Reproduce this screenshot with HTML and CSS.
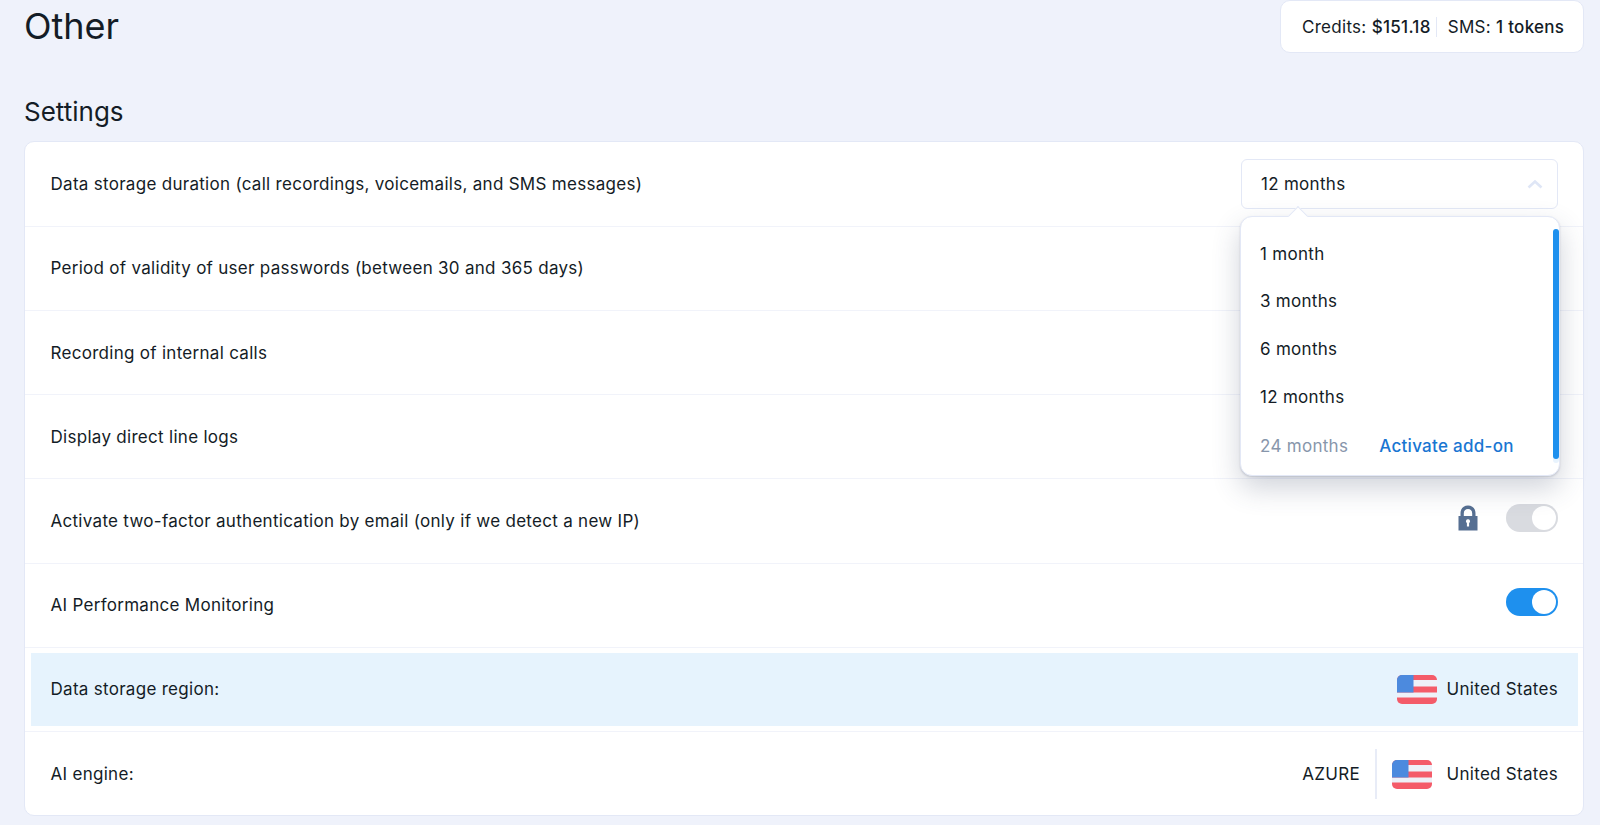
FILE: index.html
```html
<html>
    <head>
        <title>Other</title>
        <link rel="stylesheet" href="styles.css">
    </head>
    <body>
        <div class="page">
            <div class="top">
                <h1>Other</h1>
                <div class="credits">
                    <span class="credit-part">Credits: <b>$151.18</b></span>
                    <span class="credit-part sms">SMS: <b>1 tokens</b></span>
                </div>
            </div>
            <h2>Settings</h2>
            <div class="card">
                <div class="row">
                    <span>Data storage duration (call recordings, voicemails, and SMS messages)</span>
                    <div class="select-wrap">
                        <div class="select">
                            <span>12 months</span>
                            <svg class="chevron" width="16" height="10" viewBox="0 0 16 10"><path d="M1.5 8.5 L8 2.5 L14.5 8.5" fill="none" stroke="#dfe6f6" stroke-width="2.6"/></svg>
                        </div>
                        <div class="menu">
                            <div class="menu-arrow"></div>
                            <div class="menu-item">1 month</div>
                            <div class="menu-item">3 months</div>
                            <div class="menu-item">6 months</div>
                            <div class="menu-item">12 months</div>
                            <div class="menu-item locked">
                                <span class="muted">24 months</span>
                                <span class="addon">Activate add-on</span>
                            </div>
                            <div class="scrollbar"></div>
                        </div>
                    </div>
                </div>
                <div class="row"><span>Period of validity of user passwords (between 30 and 365 days)</span></div>
                <div class="row"><span>Recording of internal calls</span></div>
                <div class="row"><span>Display direct line logs</span></div>
                <div class="row">
                    <span>Activate two-factor authentication by email (only if we detect a new IP)</span>
                    <div class="right raised">
                        <svg class="lock" width="20" height="26" viewBox="0 0 20 26">
                            <path d="M0.5 11 H2.5 V8.5 C2.5 3.4 5.6 0.5 10 0.5 C14.4 0.5 17.5 3.4 17.5 8.5 V11 H19.5 V25.5 H0.5 Z M5.8 11 H14.2 V8.5 C14.2 5.6 12.6 4 10 4 C7.4 4 5.8 5.6 5.8 8.5 Z M10 14.2 A2 2 0 0 0 8.9 17.9 V21.6 H11.1 V17.9 A2 2 0 0 0 10 14.2 Z" fill="#566f92" fill-rule="evenodd"/>
                        </svg>
                        <div class="toggle off"><div class="knob"></div></div>
                    </div>
                </div>
                <div class="row">
                    <span>AI Performance Monitoring</span>
                    <div class="toggle on raised"><div class="knob"></div></div>
                </div>
                <div class="row">
                    <div class="highlight">
                        <span>Data storage region:</span>
                        <div class="right small-gap">
                            <svg class="flag" width="40" height="29" viewBox="0 0 40 29">
                                <use href="#us-flag"/>
                            </svg>
                            <span>United States</span>
                        </div>
                    </div>
                </div>
                <div class="row last">
                    <span>AI engine:</span>
                    <div class="right">
                        <span>AZURE</span>
                        <div class="divider"></div>
                        <svg class="flag" width="40" height="29" viewBox="0 0 40 29">
                            <use href="#us-flag"/>
                        </svg>
                        <span>United States</span>
                    </div>
                </div>
            </div>
        </div>
        <svg width="0" height="0" class="defs">
            <defs>
                <clipPath id="flag-clip"><rect width="40" height="29" rx="5"/></clipPath>
                <g id="us-flag" clip-path="url(#flag-clip)">
                    <rect width="40" height="29" fill="#f45b69"/>
                    <rect y="5" width="40" height="6.5" fill="#eef1f8"/>
                    <rect y="17.5" width="40" height="5" fill="#eef1f8"/>
                    <rect width="16.5" height="17.5" fill="#4c8ade"/>
                </g>
            </defs>
        </svg>
    </body>
</html>
```

FILE: styles.css
```css
*
{
    box-sizing: border-box;
}

body
{
    margin: 0;
    height: 825px;
    overflow: hidden;
    background-color: #eff2fb;
    color: #141c26;
    font-family: Inter, "Liberation Sans", sans-serif;
    font-size: 17px;
    letter-spacing: 0.29px;
}

.page
{
    padding: 0 16px 0 24px;
}

.top
{
    display: flex;
    justify-content: space-between;
    align-items: flex-start;
    height: 94px;
}

h1
{
    margin: 4px 0 0 0;
    font-size: 36px;
    line-height: 44px;
    font-weight: 400;
    letter-spacing: 0;
}

h2
{
    margin: 0 0 12px 0;
    font-size: 26px;
    line-height: 35px;
    font-weight: 400;
    letter-spacing: 0;
}

b
{
    font-weight: 500;
}

.credits
{
    display: flex;
    align-items: center;
    width: 304px;
    height: 53px;
    padding: 0 21px;
    background-color: white;
    border: 1.5px solid #e3e8f6;
    border-radius: 10px;
}

.credit-part
{
    white-space: nowrap;
}

.sms
{
    margin-left: 5px;
    padding-left: 11px;
    border-left: 1px solid #e3e8f6;
}

.card
{
    padding-top: 0.6px;
    background-color: white;
    border: 1.5px solid #e3e8f6;
    border-radius: 10px;
    height: 675px;
}

.row
{
    display: flex;
    justify-content: space-between;
    align-items: center;
    height: 84.2px;
    padding: 0 25px 0 25.5px;
    border-bottom: 1px solid #f1f3fa;
}

.row.last
{
    border-bottom: none;
}

.right
{
    display: flex;
    align-items: center;
    gap: 15px;
}

.raised
{
    gap: 28px;
    margin-top: -6px;
}

.small-gap
{
    gap: 10px;
}

.select-wrap
{
    position: relative;
}

.select
{
    display: flex;
    justify-content: space-between;
    align-items: center;
    width: 317px;
    height: 50px;
    padding: 0 14px 0 19px;
    border: 1.5px solid #e3e8f6;
    border-radius: 6px;
}

.menu
{
    position: absolute;
    top: 57px;
    left: -1px;
    z-index: 2;
    width: 320px;
    height: 260px;
    padding-top: 12.5px;
    background-color: white;
    border: 1px solid #e3e8f6;
    border-radius: 12px;
    box-shadow: 0 1px 2px rgba(60, 70, 100, 0.2), 0 12px 28px rgba(60, 70, 100, 0.24);
}

.menu-arrow
{
    position: absolute;
    top: -8px;
    left: 50px;
    width: 14px;
    height: 14px;
    background-color: white;
    border-left: 1.5px solid #e3e8f6;
    border-top: 1.5px solid #e3e8f6;
    transform: rotate(45deg);
}

.menu-item
{
    display: flex;
    align-items: center;
    gap: 31px;
    height: 47.7px;
    padding-left: 19px;
}

.menu-item.locked
{
    margin-top: 2px;
}

.muted
{
    color: #8796ab;
}

.addon
{
    color: #1976d2;
    font-weight: 500;
}

.scrollbar
{
    position: absolute;
    top: 12px;
    right: 0;
    width: 6px;
    height: 230px;
    background-color: #1e90ee;
    border-radius: 3px;
    box-shadow: 0 4px 0 #e8f3fd;
}

.toggle
{
    display: flex;
    justify-content: flex-end;
    align-items: center;
    width: 52px;
    height: 28px;
    padding: 2px;
    border-radius: 14px;
}

.toggle.off
{
    background-color: #d9dbe0;
}

.toggle.on
{
    background-color: #1e90ee;
}

.knob
{
    width: 24px;
    height: 24px;
    background-color: white;
    border-radius: 50%;
}

.highlight
{
    display: flex;
    justify-content: space-between;
    align-items: center;
    width: 1549px;
    height: 73px;
    margin: 0 -20px;
    padding: 0 20px;
    background-color: #e6f3fd;
}

.divider
{
    width: 1.5px;
    height: 50px;
    background-color: #e8ecf7;
}

.defs
{
    position: absolute;
}
```
